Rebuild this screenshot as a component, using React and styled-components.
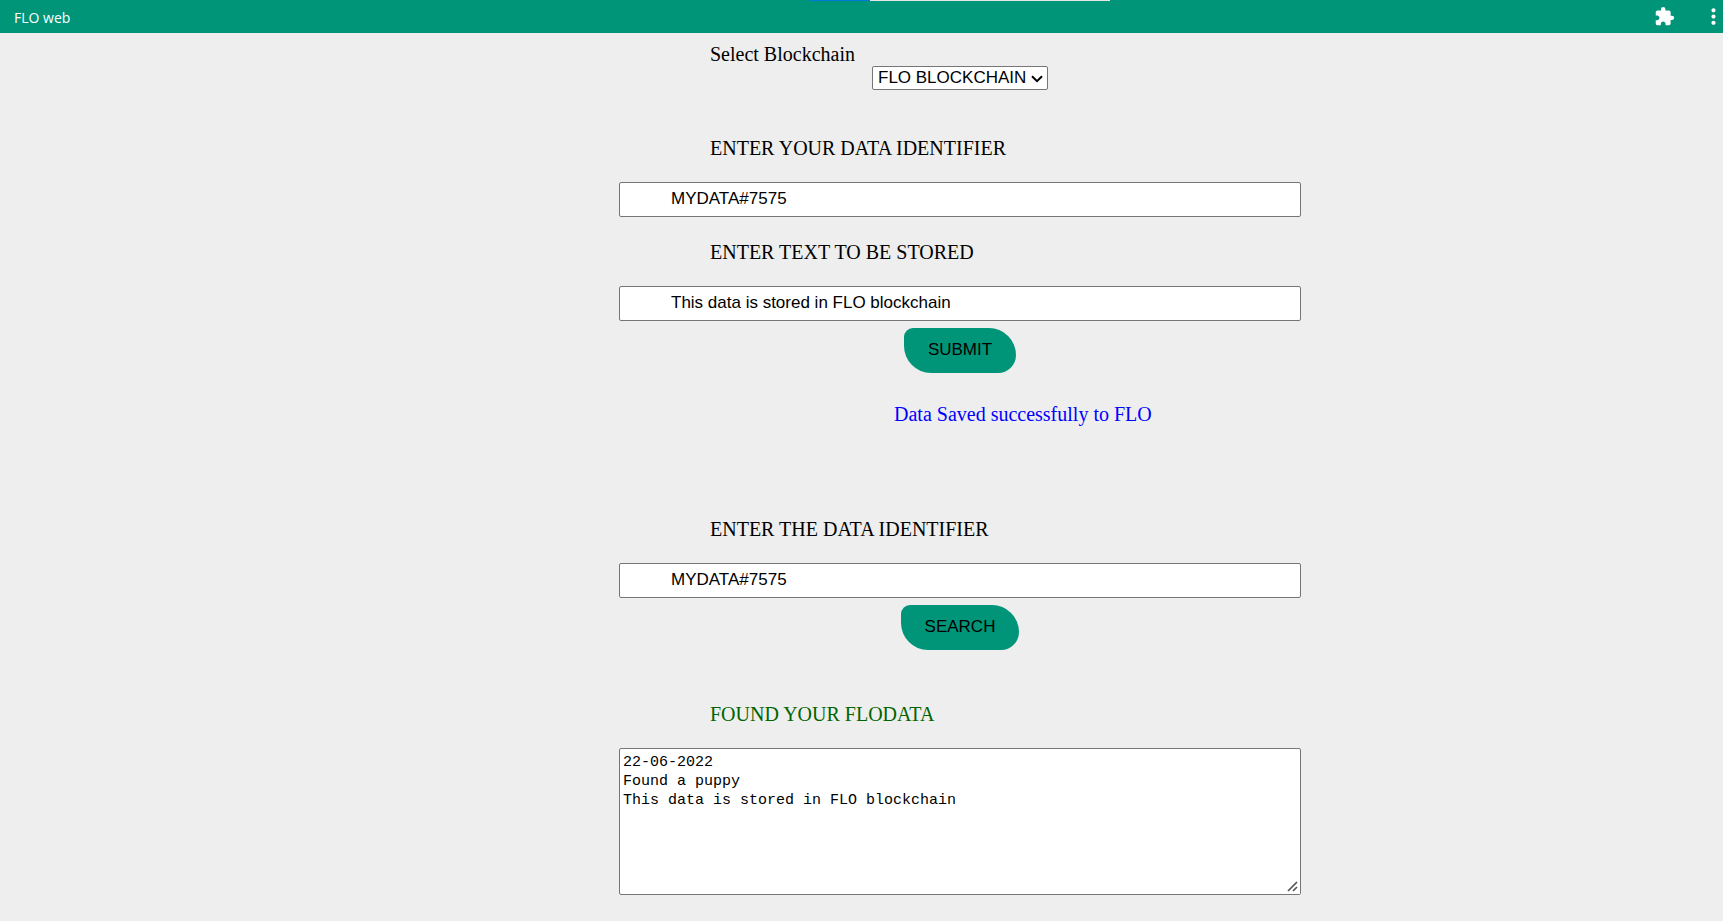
import React, { useState } from 'react';
import styled, { createGlobalStyle } from 'styled-components';
import { MdExtension, MdMoreVert } from 'react-icons/md';

const GlobalStyle = createGlobalStyle`
  *, *::before, *::after { box-sizing: border-box; }
  body {
    margin: 0;
    background: #eeeeee;
    color: #000;
    font-family: "Liberation Serif", "Times New Roman", serif;
    font-size: 20px;
    line-height: 24px;
  }
`;

const TitleBar = styled.header`
  position: relative;
  display: flex;
  align-items: center;
  height: 33px;
  padding-left: 14px;
  background: #009578;
  color: #fff;
`;

const Title = styled.span`
  flex: 1;
  padding-top: 2px;
  font: 14px/20px "Open Sans", "Noto Sans", sans-serif;
`;

const LoadingStrip = styled.div`
  position: absolute;
  top: 0;
  left: 47%;
  display: flex;
  width: 300px;
  height: 1px;
  background: #e6e6e6;
`;

const LoadingValue = styled.div`
  width: 20%;
  background: #0078d7;
`;

const IconButton = styled.button`
  display: flex;
  align-items: center;
  justify-content: center;
  width: ${({ $width }) => $width}px;
  height: 32px;
  padding: 0;
  border: 0;
  background: none;
  color: #fff;

  svg {
    flex-shrink: 0;
  }
`;

const Page = styled.main`
  display: grid;
  grid-template-columns: 619fr 682fr 422fr;
  padding: 10px 0 24px;
`;

const Column = styled.div`
  grid-column: 2;
  display: flex;
  flex-direction: column;
`;

const ChainPicker = styled.div`
  display: flex;
  flex-direction: column;
  margin-bottom: 46px;
  line-height: 23px;
`;

const Form = styled.form`
  display: flex;
  flex-direction: column;
`;

const Field = styled.div`
  display: flex;
  flex-direction: column;
  gap: 22px;

  & + & {
    margin-top: 23px;
  }
`;

const Label = styled.label`
  padding-left: 91px;
  color: ${({ $color = '#000' }) => $color};
`;

const Actions = styled.div`
  display: flex;
  justify-content: center;
  margin-top: 7px;
`;

const TextInput = styled.input`
  width: 100%;
  height: 35px;
  padding: 0 4px 1px 51px;
  border: 1px solid #767676;
  border-radius: 2px;
  background: #fff;
  color: #000;
  font: 17px "Liberation Sans", Arial, sans-serif;
`;

const LeafButton = styled.button`
  height: 45px;
  padding: 0 24px 2px;
  border: 0;
  border-radius: 10px 30px 20px 30px;
  background: #009578;
  color: #000;
  font: 17px "Liberation Sans", Arial, sans-serif;
`;

const SelectBox = styled.div`
  position: relative;
  align-self: center;
  display: flex;
`;

const Select = styled.select`
  appearance: none;
  height: 24px;
  padding: 0 20px 2px 5px;
  border: 1px solid #767676;
  border-radius: 2px;
  background: #fff;
  color: #000;
  font: 17px "Liberation Sans", Arial, sans-serif;
`;

const Chevron = styled.svg`
  position: absolute;
  top: 9px;
  right: 5px;
  width: 12px;
  height: 8px;
  pointer-events: none;
`;

const Status = styled.p`
  margin: 29px 0 91px;
  padding-left: 275px;
  color: #0000ff;
`;

const Found = styled.section`
  margin-top: 52px;
`;

const ResultBox = styled.div`
  position: relative;
`;

const Result = styled.textarea`
  display: block;
  width: 100%;
  height: 147px;
  padding: 4px 3px;
  border: 1px solid #767676;
  border-radius: 2px;
  background: #fff;
  color: #000;
  font: 15px/19px "Liberation Mono", monospace;
  resize: both;

  &::-webkit-resizer {
    background: #fff;
  }
`;

const Grip = styled.svg`
  position: absolute;
  right: 3px;
  bottom: 3px;
  width: 11px;
  height: 11px;
  pointer-events: none;
`;

const stay = (event) => event.preventDefault();

function LabelledInput({ id, label, initial }) {
  const [value, setValue] = useState(initial);
  return (
    <Field>
      <Label htmlFor={id}>{label}</Label>
      <TextInput id={id} type="text" value={value} onChange={(e) => setValue(e.target.value)} />
    </Field>
  );
}

export default function App() {
  return (
    <>
      <GlobalStyle />
      <TitleBar>
        <Title>FLO web</Title>
        <LoadingStrip><LoadingValue /></LoadingStrip>
        <IconButton type="button" $width={80} aria-label="Extensions">
          <MdExtension size={21} />
        </IconButton>
        <IconButton type="button" $width={19} aria-label="More">
          <MdMoreVert size={25} />
        </IconButton>
      </TitleBar>
      <Page>
        <Column>
          <ChainPicker>
            <Label htmlFor="chain">Select Blockchain</Label>
            <SelectBox>
              <Select id="chain" defaultValue="flo">
                <option value="flo">FLO BLOCKCHAIN</option>
              </Select>
              <Chevron viewBox="0 0 12 8" aria-hidden="true">
                <path d="M1 1.2 6 6.2 11 1.2" fill="none" stroke="#000" strokeWidth="2" />
              </Chevron>
            </SelectBox>
          </ChainPicker>
          <Form onSubmit={stay}>
            <LabelledInput id="data-id" label="ENTER YOUR DATA IDENTIFIER" initial="MYDATA#7575" />
            <LabelledInput id="data-text" label="ENTER TEXT TO BE STORED" initial="This data is stored in FLO blockchain" />
            <Actions>
              <LeafButton type="submit">SUBMIT</LeafButton>
            </Actions>
          </Form>
          <Status role="status">Data Saved successfully to FLO</Status>
          <Form onSubmit={stay}>
            <LabelledInput id="search-id" label="ENTER THE DATA IDENTIFIER" initial="MYDATA#7575" />
            <Actions>
              <LeafButton type="submit">SEARCH</LeafButton>
            </Actions>
          </Form>
          <Found>
            <Field>
              <Label htmlFor="result" $color="#006400">FOUND YOUR FLODATA</Label>
              <ResultBox>
                <Result
                  id="result"
                  spellCheck={false}
                  defaultValue={'22-06-2022\nFound a puppy\nThis data is stored in FLO blockchain'}
                />
                <Grip viewBox="0 0 11 11" aria-hidden="true">
                  <path d="M1 10 10 1M6 10l4-4" fill="none" stroke="#555" strokeWidth="1.7" />
                </Grip>
              </ResultBox>
            </Field>
          </Found>
        </Column>
      </Page>
    </>
  );
}
